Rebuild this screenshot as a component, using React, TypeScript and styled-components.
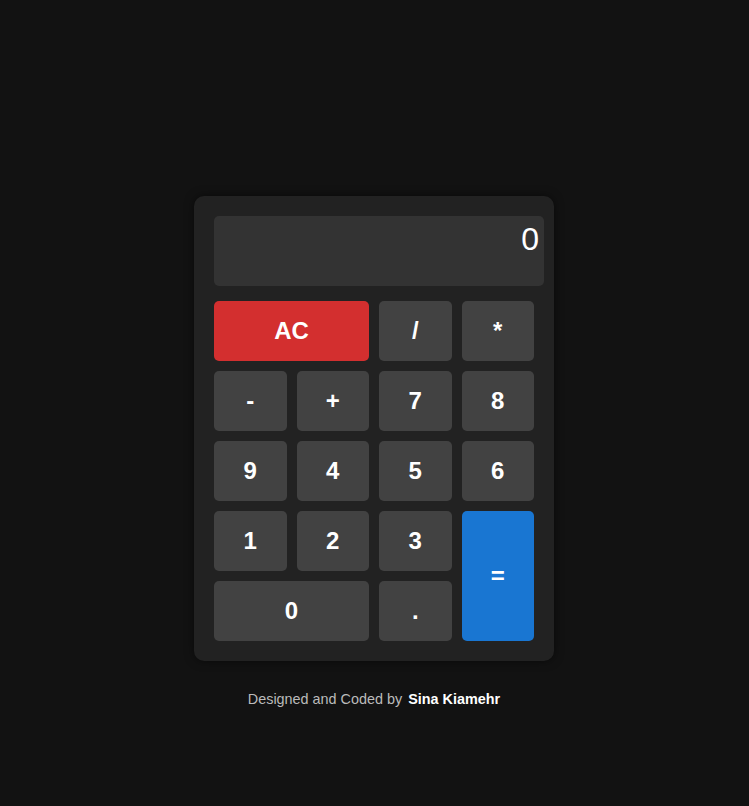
import React from "react";
import styled, { createGlobalStyle } from "styled-components";

const GlobalStyle = createGlobalStyle`
  html, body {
    margin: 0;
    padding: 0;
    background-color: #121212;
    font-family: "Liberation Sans", Arial, sans-serif;
  }
`;

const Page = styled.main`
  min-height: 100vh;
  display: flex;
  flex-direction: column;
  align-items: center;
  padding-top: 196px;
  padding-right: 1px;
  box-sizing: border-box;
`;

const Calculator = styled.div`
  width: 320px;
  padding: 20px;
  background-color: #222222;
  border-radius: 10px;
  box-shadow: 0 0 10px rgba(0, 0, 0, 0.5);
`;

const Display = styled.div`
  width: 100%;
  height: 60px;
  padding: 5px;
  margin-bottom: 15px;
  background-color: #333333;
  border-radius: 5px;
  color: #ffffff;
  font-size: 32px;
  text-align: right;
`;

const Keys = styled.div`
  display: grid;
  grid-template-columns: repeat(4, 1fr);
  grid-auto-rows: 60px;
  gap: 10px;
`;

type Variant = "default" | "clear" | "equals";

const colors: Record<Variant, string> = {
  default: "#424242",
  clear: "#d32f2f",
  equals: "#1976d2",
};

const Key = styled.button<{ $variant?: Variant; $wide?: boolean; $tall?: boolean }>`
  border: none;
  border-radius: 5px;
  background-color: ${({ $variant = "default" }) => colors[$variant]};
  color: #ffffff;
  font-family: "Liberation Sans", Arial, sans-serif;
  font-size: 24px;
  font-weight: bold;
  cursor: pointer;
  grid-column: ${({ $wide }) => ($wide ? "span 2" : "auto")};
  grid-row: ${({ $tall }) => ($tall ? "span 2" : "auto")};
`;

const Footer = styled.footer`
  margin-top: 30px;
  color: #bbbbbb;
  font-size: 14.4px;
`;

const Author = styled.strong`
  color: #ffffff;
  margin-left: 2px;
`;

const App: React.FC = () => (
  <>
    <GlobalStyle />
    <Page>
      <Calculator>
        <Display>0</Display>
        <Keys>
          <Key $variant="clear" $wide>AC</Key>
          <Key>/</Key>
          <Key>*</Key>
          <Key>-</Key>
          <Key>+</Key>
          <Key>7</Key>
          <Key>8</Key>
          <Key>9</Key>
          <Key>4</Key>
          <Key>5</Key>
          <Key>6</Key>
          <Key>1</Key>
          <Key>2</Key>
          <Key>3</Key>
          <Key $variant="equals" $tall>=</Key>
          <Key $wide>0</Key>
          <Key>.</Key>
        </Keys>
      </Calculator>
      <Footer>
        Designed and Coded by <Author>Sina Kiamehr</Author>
      </Footer>
    </Page>
  </>
);

export default App;
